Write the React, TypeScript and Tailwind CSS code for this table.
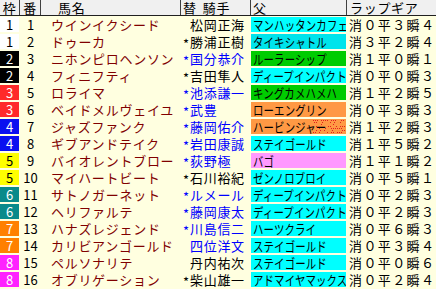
import React from "react";

type Row = {
  waku: number;
  num: number;
  name: string;
  star: boolean;
  jockey: string;
  blue: boolean;
  sire: string;
  sireBg: string;
  lap: string;
  dots?: boolean;
};

const wakuCls: Record<number, string> = {
  1: "bg-white text-black",
  2: "bg-black text-white",
  3: "bg-[#ff2a2a] text-white",
  4: "bg-[#0a10f0] text-white",
  5: "bg-[#ffff00] text-black",
  6: "bg-[#098a8a] text-white",
  7: "bg-[#ff8000] text-white",
  8: "bg-[#ff22ff] text-white",
};

const CY = "bg-[#00ffff]";
const CY2 = "bg-[#00e4ec]";
const GR = "bg-[#00cc00]";
const OR = "bg-[#ff9944]";
const PK = "bg-[#ff99ff]";

const rows: Row[] = [
  { waku: 1, num: 1, name: "ウインイクシード", star: false, jockey: "松岡正海", blue: false, sire: "マンハッタンカフェ", sireBg: CY, lap: "消０平３瞬４" },
  { waku: 1, num: 2, name: "ドゥーカ", star: true, jockey: "勝浦正樹", blue: false, sire: "タイキシャトル", sireBg: CY2, lap: "消３平２瞬４" },
  { waku: 2, num: 3, name: "ニホンピロヘンソン", star: true, jockey: "国分恭介", blue: true, sire: "ルーラーシップ", sireBg: GR, lap: "消１平０瞬１" },
  { waku: 2, num: 4, name: "フィニフティ", star: true, jockey: "吉田隼人", blue: false, sire: "ディープインパクト", sireBg: CY, lap: "消０平０瞬３" },
  { waku: 3, num: 5, name: "ロライマ", star: true, jockey: "池添謙一", blue: true, sire: "キングカメハメハ", sireBg: GR, lap: "消１平２瞬５" },
  { waku: 3, num: 6, name: "ベイドメルヴェイユ", star: true, jockey: "武豊", blue: true, sire: "ローエングリン", sireBg: OR, lap: "消０平３瞬３" },
  { waku: 4, num: 7, name: "ジャズファンク", star: true, jockey: "藤岡佑介", blue: true, sire: "ハービンジャー", sireBg: OR, lap: "消１平２瞬３", dots: true },
  { waku: 4, num: 8, name: "ギブアンドテイク", star: true, jockey: "岩田康誠", blue: true, sire: "ステイゴールド", sireBg: CY, lap: "消１平５瞬２" },
  { waku: 5, num: 9, name: "バイオレントブロー", star: true, jockey: "荻野極", blue: true, sire: "バゴ", sireBg: PK, lap: "消１平１瞬２" },
  { waku: 5, num: 10, name: "マイハートビート", star: true, jockey: "石川裕紀", blue: false, sire: "ゼンノロブロイ", sireBg: CY, lap: "消０平５瞬１" },
  { waku: 6, num: 11, name: "サトノガーネット", star: true, jockey: "ルメール", blue: true, sire: "ディープインパクト", sireBg: CY, lap: "消０平２瞬３" },
  { waku: 6, num: 12, name: "ヘリファルテ", star: true, jockey: "藤岡康太", blue: true, sire: "ディープインパクト", sireBg: CY, lap: "消０平２瞬３" },
  { waku: 7, num: 13, name: "ハナズレジェンド", star: true, jockey: "川島信二", blue: true, sire: "ハーツクライ", sireBg: CY, lap: "消０平６瞬３" },
  { waku: 7, num: 14, name: "カリビアンゴールド", star: false, jockey: "四位洋文", blue: true, sire: "ステイゴールド", sireBg: CY, lap: "消０平３瞬４" },
  { waku: 8, num: 15, name: "ペルソナリテ", star: false, jockey: "丹内祐次", blue: false, sire: "ステイゴールド", sireBg: CY, lap: "消０平０瞬６" },
  { waku: 8, num: 16, name: "オブリゲーション", star: true, jockey: "柴山雄一", blue: false, sire: "アドマイヤマックス", sireBg: CY, lap: "消０平２瞬４" },
];

function Dots() {
  const pts: [number, number][] = [];
  let s = 7;
  for (let y = 1; y < 15; y += 2) {
    for (let x = 62; x < 94; x += 2) {
      s = (s * 1103515245 + 12345) % 2147483648;
      if (s % 5 < 2) pts.push([x + ((y >> 1) % 2), y]);
    }
  }
  return (
    <svg className="absolute left-0 top-0" width="95" height="15" viewBox="0 0 95 15">
      {pts.map(([x, y], i) => (
        <rect key={i} x={x} y={y} width="1" height="1" fill="#e02020" />
      ))}
    </svg>
  );
}

const grid = "grid grid-cols-[20px_21px_140px_70px_96px_1fr]";

export default function App() {
  return (
    <div className="w-[436px] h-[289px] overflow-hidden bg-[#ffffe0] font-['Noto_Sans_CJK_JP',sans-serif] text-[13px] leading-none tracking-[0.7px] text-black">
      <div className={`${grid} h-[16px] bg-[#f0f0f0] border-b border-[#202020]`}>
        <div className="border-r border-[#404040] flex items-center justify-center">枠</div>
        <div className="border-r border-[#404040] flex items-center justify-center">番</div>
        <div className="border-r border-[#404040] flex items-center pl-[17px]">馬名</div>
        <div className="border-r border-[#404040] flex items-center pl-[2px]">
          替<span className="inline-block w-[6px]" />騎手
        </div>
        <div className="border-r border-[#404040] flex items-center pl-[2px]">父</div>
        <div className="flex items-center pl-[3px]">ラップギア</div>
      </div>
      {rows.map((r) => (
        <div key={r.num} className={`${grid} h-[17px] items-center`}>
          <div className={`w-[19px] h-[15px] flex items-center justify-center tracking-normal ${wakuCls[r.waku]}`}>
            {r.waku}
          </div>
          <div className="text-center tracking-normal">{r.num}</div>
          <div className="pl-[10px] text-[#800000] whitespace-nowrap">{r.name}</div>
          <div className={`pl-[2px] flex items-center whitespace-nowrap ${r.blue ? "text-[#0000ff]" : "text-black"}`}>
            <span className="inline-block w-[7px] relative top-[2px]">{r.star ? "*" : ""}</span>
            {r.jockey}
          </div>
          <div className={`relative w-[95px] h-[15px] flex items-center pl-[2px] whitespace-nowrap overflow-hidden ${r.sireBg}`}>
            {r.dots ? <Dots /> : null}
            <span className="relative inline-block origin-left scale-x-[0.8] tracking-[0.2px]">{r.sire}</span>
          </div>
          <div className="pl-[2px] whitespace-nowrap tracking-[1.4px]">{r.lap}</div>
        </div>
      ))}
    </div>
  );
}
